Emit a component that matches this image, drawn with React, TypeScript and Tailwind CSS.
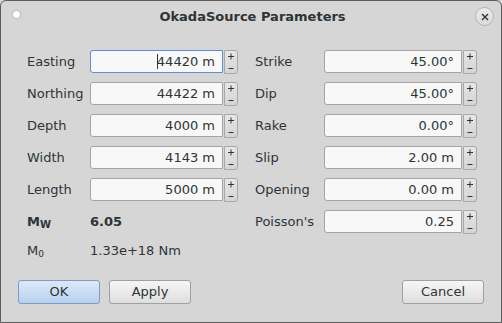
const FONT = { fontFamily: '"DejaVu Sans", "Liberation Sans", sans-serif' };

type Field = { label: string; value: string; focused?: boolean };

const LEFT: Field[] = [
    { label: 'Easting', value: '44420 m', focused: true },
    { label: 'Northing', value: '44422 m' },
    { label: 'Depth', value: '4000 m' },
    { label: 'Width', value: '4143 m' },
    { label: 'Length', value: '5000 m' },
];

const RIGHT: Field[] = [
    { label: 'Strike', value: '45.00°' },
    { label: 'Dip', value: '45.00°' },
    { label: 'Rake', value: '0.00°' },
    { label: 'Slip', value: '2.00 m' },
    { label: 'Opening', value: '0.00 m' },
    { label: "Poisson's", value: '0.25' },
];

// plus / minus arrows drawn as tiny icons
function SpinArrows() {
    return (
        <svg width="12" height="22" viewBox="0 0 12 22">
            <path d="M6 2.5 V8.5 M3 5.5 H9" stroke="#2e3436" strokeWidth="1" />
            <path d="M3.5 17.5 H8.5" stroke="#2e3436" strokeWidth="1" />
        </svg>
    );
}

function Spin({ field, labelW, fieldW }: { field: Field; labelW: string; fieldW: string }) {
    return (
        <div className="flex h-[23px] items-center">
            <div className={`${labelW} text-[13px] text-[#2e3436]`}>{field.label}</div>
            <div
                className={`${fieldW} h-[23px] flex items-center justify-end pr-[7px] rounded-l-[3px] border bg-[#f8f8f8] text-[13px] text-[#2e3436] ${
                    field.focused ? 'border-[#5b8fd4]' : 'border-[#a4a4a4]'
                }`}
            >
                {field.focused && <span className="w-px h-[15px] bg-[#2e3436] mr-[-1px]" />}
                {field.value}
            </div>
            <div className="ml-px w-[14px] h-[24px] flex items-center justify-center rounded-r-[3px] border border-[#a8a8a8] bg-gradient-to-b from-[#e6e6e6] to-[#d4d4d4]">
                <SpinArrows />
            </div>
        </div>
    );
}

function Btn({ label, primary, className }: { label: string; primary?: boolean; className?: string }) {
    return (
        <button
            type="button"
            className={`w-[82px] h-[24px] rounded-[3px] border text-[13px] text-[#2e3436] ${
                primary
                    ? 'border-[#7f9cc6] bg-gradient-to-b from-[#dde9f8] to-[#b8d0ee]'
                    : 'border-[#a0a0a0] bg-gradient-to-b from-[#f6f6f6] to-[#dedede]'
            } ${className ?? ''}`}
        >
            {label}
        </button>
    );
}

export default function App() {
    return (
        <div className="w-[502px] h-[323px] bg-[#d6d6d6]" style={FONT}>
            <div className="w-full h-full flex flex-col border border-[#5e5e5e] rounded-t-[6px] bg-[#d6d6d6]">
                {/* Title bar */}
                <div className="relative h-[31px] flex items-center justify-center pl-[3px]">
                    <div className="absolute left-[12px] top-[10px] w-[7px] h-[7px] rounded-full bg-white shadow-[0_0_2px_#888]" />
                    <div className="text-[13px] font-bold text-[#2e3436]">OkadaSource Parameters</div>
                    <div className="absolute right-[7px] top-[6px] w-[19px] h-[19px] rounded-full border border-[#b4b4b4] bg-gradient-to-b from-[#ececec] to-[#dadada] flex items-center justify-center">
                        <svg width="8" height="8" viewBox="0 0 8 8">
                            <path d="M1 1 L7 7 M7 1 L1 7" stroke="#2e3436" strokeWidth="1.4" />
                        </svg>
                    </div>
                </div>

                <div className="flex pl-[26px] pt-[18px] gap-[17px]">
                    <div className="flex flex-col gap-[9px]">
                        {LEFT.map((f) => (
                            <Spin key={f.label} field={f} labelW="w-[63px]" fieldW="w-[133px]" />
                        ))}
                        <div className="flex h-[23px] items-center text-[#2e3436]">
                            <div className="w-[63px] text-[13px] font-bold">
                                M<span className="text-[10px] relative top-[2px]">W</span>
                            </div>
                            <div className="text-[13px] font-bold">6.05</div>
                        </div>
                        <div className="flex h-[18px] items-center text-[#2e3436]">
                            <div className="w-[63px] text-[13px]">
                                M<span className="text-[9px] relative top-[2px]">0</span>
                            </div>
                            <div className="text-[13px]">1.33e+18 Nm</div>
                        </div>
                    </div>
                    <div className="flex flex-col gap-[9px]">
                        {RIGHT.map((f) => (
                            <Spin key={f.label} field={f} labelW="w-[69px]" fieldW="w-[138px]" />
                        ))}
                    </div>
                </div>

                <div className="flex px-[17px] mt-[20px]">
                    <Btn label="OK" primary />
                    <Btn label="Apply" className="ml-[9px]" />
                    <Btn label="Cancel" className="ml-auto" />
                </div>
            </div>
        </div>
    );
}
